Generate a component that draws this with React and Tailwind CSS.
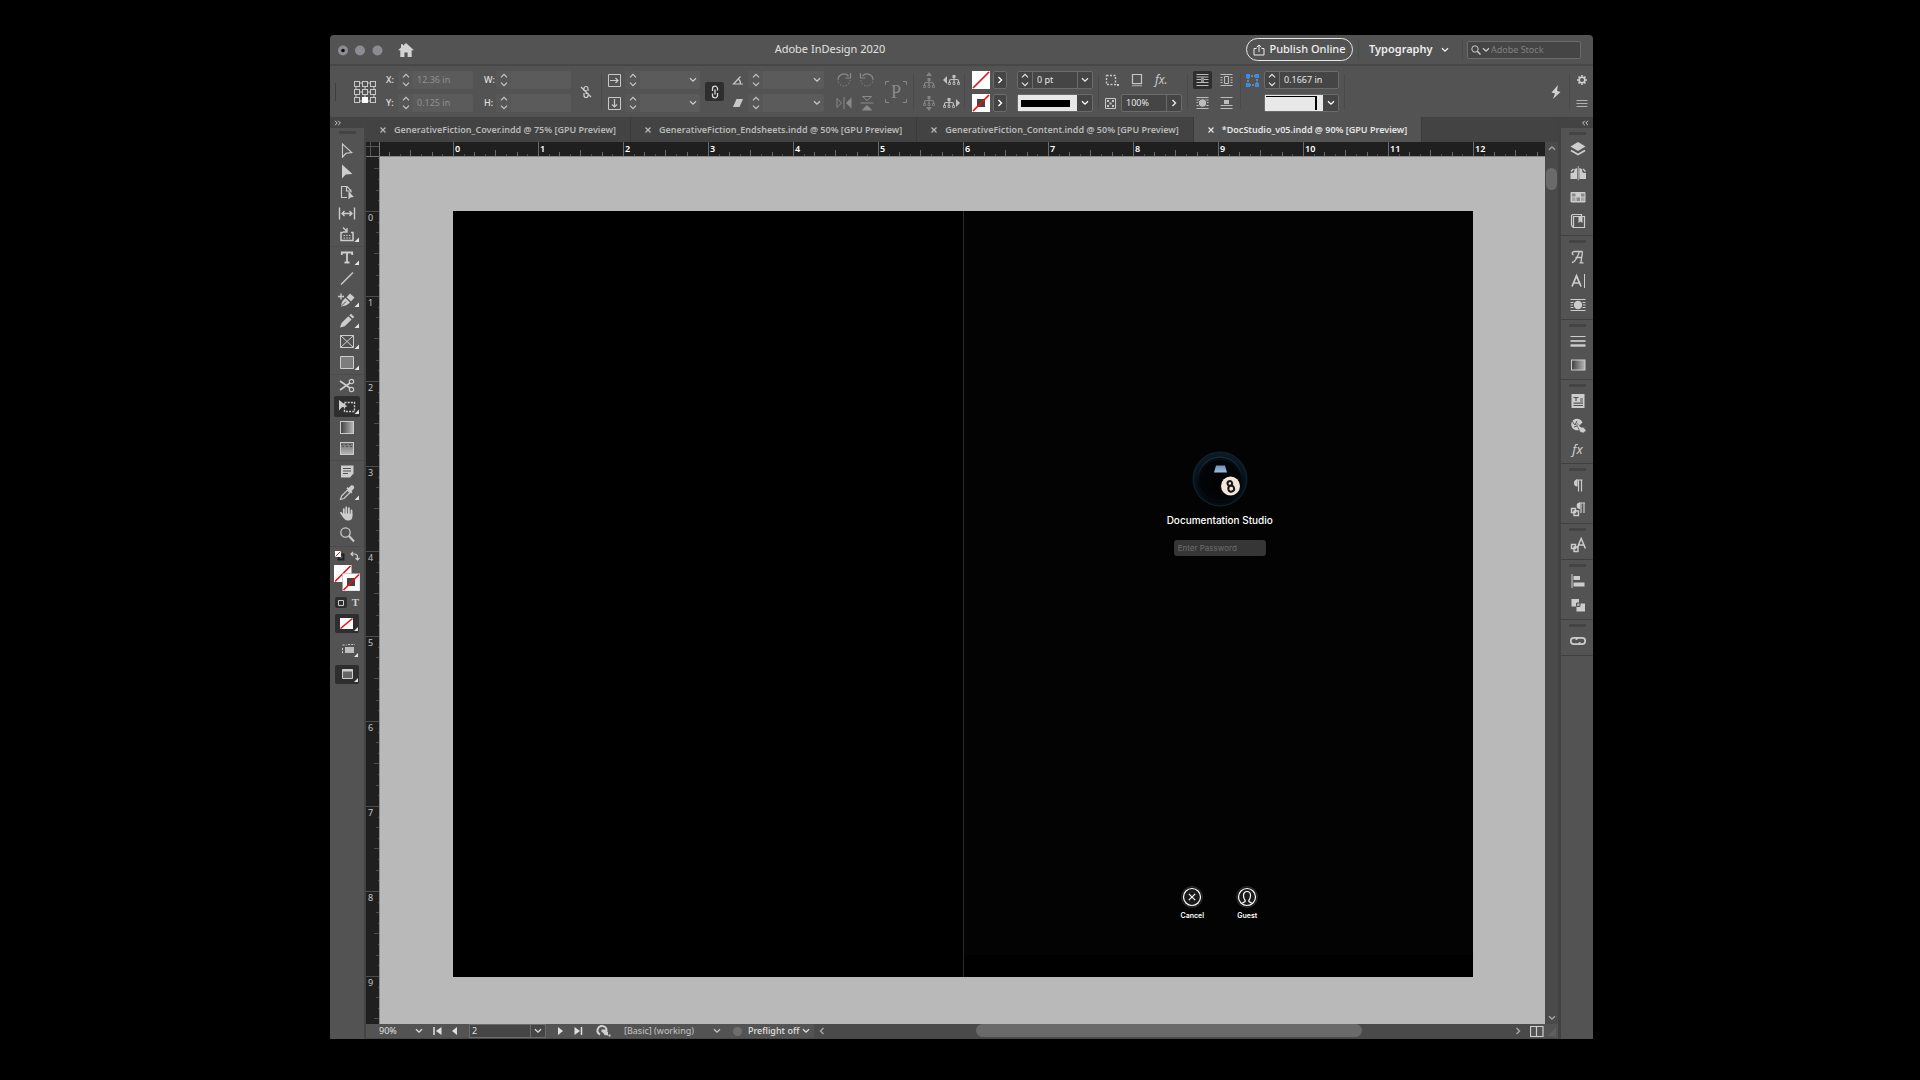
import { useState } from "react";
import clsx from "clsx";

const INCHES = [0, 1, 2, 3, 4, 5, 6, 7, 8, 9, 10, 11, 12];

const TABS = [
  "GenerativeFiction_Cover.indd @ 75% [GPU Preview]",
  "GenerativeFiction_Endsheets.indd @ 50% [GPU Preview]",
  "GenerativeFiction_Content.indd @ 50% [GPU Preview]",
  "*DocStudio_v05.indd @ 90% [GPU Preview]",
];

const Icon = ({ w = 16, h = 16, className, children }) => (
  <svg
    width={w}
    height={h}
    viewBox={`0 0 ${w} ${h}`}
    fill="none"
    stroke="currentColor"
    strokeWidth="1"
    className={clsx("shrink-0", className)}
    aria-hidden="true"
  >
    {children}
  </svg>
);

const ChevronDown = ({ className }) => (
  <Icon w={8} h={6} className={className}>
    <path d="M1 1.2l3 3 3-3" strokeWidth="1.3" />
  </Icon>
);

const ChevronRight = () => (
  <Icon w={6} h={8}>
    <path d="M1.5 1l3 3-3 3" strokeWidth="1.4" />
  </Icon>
);

const Stepper = () => (
  <Icon w={8} h={14}>
    <path d="M1 4.4l3-3 3 3M1 9.6l3 3 3-3" strokeWidth="1.2" />
  </Icon>
);

const NoneSwatch = ({ ring }) => (
  <svg width="18" height="18" className="shrink-0" aria-hidden="true">
    <rect width="18" height="18" fill="#fff" />
    {ring && <rect x="5" y="5" width="8" height="8" fill="#454545" />}
    <path d="M1 17L17 1" stroke="#f40b0b" strokeWidth="1.7" />
  </svg>
);

const Dropdown = ({ label, value, className }) => (
  <label className={clsx("flex items-center", className)}>
    <select
      aria-label={label}
      className="min-w-0 flex-1 appearance-none bg-transparent outline-none"
    >
      <option>{value}</option>
    </select>
    <ChevronDown className="pointer-events-none" />
  </label>
);

const Field = ({ label, value, enabled, menu, className }) => (
  <div
    className={clsx(
      "flex h-[18px] rounded-xs",
      enabled
        ? "border border-[#6b6b6b] bg-[#454545] text-[#e6e6e6]"
        : "bg-[#5b5b5b] text-[#909090]",
      className
    )}
  >
    <button
      aria-label={`Step ${label}`}
      className={clsx(
        "flex w-[15px] shrink-0 items-center justify-center",
        enabled ? "border-r border-[#6b6b6b]" : "bg-[#575757] text-[#c8c8c8]"
      )}
    >
      <Stepper />
    </button>
    <input
      aria-label={label}
      defaultValue={value}
      className="w-0 min-w-0 flex-1 bg-transparent pl-1 text-[9px] outline-none"
    />
    {menu && (
      <button
        aria-label={`${label} options`}
        className={clsx(
          "flex w-[15px] shrink-0 items-center justify-center",
          enabled ? "border-l border-[#6b6b6b]" : "text-[#c8c8c8]"
        )}
      >
        <ChevronDown />
      </button>
    )}
  </div>
);

const LabeledField = ({ name, value }) => (
  <div className="flex items-center">
    <span className="w-[12px] text-[9px] font-medium text-[#e0e0e0]">{name}:</span>
    <Field label={name} value={value} className="w-[75px]" />
  </div>
);

const Divider = ({ className }) => (
  <div className={clsx("w-px self-stretch bg-[#4a4a4a]", className)} />
);

const Rows = ({ className, children }) => (
  <div className={clsx("flex shrink-0 flex-col gap-[5px]", className)}>{children}</div>
);

const Cell = ({ label, className, children }) => (
  <button
    aria-label={label}
    className={clsx("flex h-[18px] items-center justify-center", className)}
  >
    {children}
  </button>
);

const TitleBar = () => (
  <header className="flex h-[29px] shrink-0 items-center pr-3 pl-2">
    <svg width="46" height="12" className="shrink-0" aria-hidden="true">
      <circle cx="5" cy="6.5" r="5" fill="#8e8b93" />
      <circle cx="5" cy="6.5" r="1.8" fill="#111" />
      <circle cx="22" cy="6.5" r="5" fill="#8e8b93" />
      <circle cx="39.5" cy="6.5" r="5" fill="#8e8b93" />
    </svg>
    <button aria-label="Home" className="ml-[14px] text-[#d2d2d2]">
      <Icon w={16} h={14}>
        <path
          d="M8 0L16 7.2h-2.3V14H9.6V9.4H6.4V14H2.3V7.2H0L3 4.4V1.2h2v1.5z"
          fill="currentColor"
          stroke="none"
        />
      </Icon>
    </button>
    <h1 className="flex-1 text-center text-[11px] text-[#e2e2e2]">
      Adobe InDesign 2020
    </h1>
    <button className="flex h-[23px] w-[107px] items-center justify-center gap-1 rounded-full border border-[#e8e8e8] text-[11px] font-medium text-[#eeeeee]">
      <Icon w={12} h={12}>
        <path d="M3.5 4.5H1V11h10V4.5H8.5M6 8V1M3.7 3.2L6 1l2.3 2.2" />
      </Icon>
      Publish Online
    </button>
    <Divider className="my-1 ml-[5px]" />
    <Dropdown
      label="Workspace"
      value="Typography"
      className="ml-[10px] gap-2 text-[11px] font-semibold text-[#eeeeee]"
    />
    <Divider className="my-1 ml-[13px]" />
    <label className="ml-[4px] flex h-[18px] w-[114px] items-center gap-px rounded-xs border border-[#6b6b6b] bg-[#454545] pl-[3px] text-[#cccccc]">
      <Icon w={10} h={10}>
        <circle cx="4" cy="4" r="3.2" />
        <path d="M6.3 6.3L9.5 9.5" strokeWidth="1.4" />
      </Icon>
      <ChevronDown />
      <input
        aria-label="Search"
        placeholder="Adobe Stock"
        className="w-0 min-w-0 flex-1 bg-transparent text-[9px] outline-none placeholder:text-[#808080]"
      />
    </label>
  </header>
);

const ReferencePoints = () => (
  <Icon w={24} h={24} className="text-[#c8c8c8]">
    <path d="M6 3h3M15 3h3M6 12h3M15 12h3M6 21h3M15 21h3M3 6v3M3 15v3M12 6v3M12 15v3M21 6v3M21 15v3" />
    {[1, 9, 17].map((y) =>
      [1, 9, 17].map((x) => (
        <rect
          key={`${x}-${y}`}
          x={x + 0.5}
          y={y + 0.5}
          width="5"
          height="5"
          fill={x === 9 && y === 17 ? "#fff" : "none"}
          stroke={x === 9 && y === 17 ? "#fff" : "currentColor"}
        />
      ))
    )}
  </Icon>
);

// 12 x 11 hierarchy: one parent box over three children
const TreeGlyph = () => (
  <>
    <path d="M6 3v6M1.5 9V7q0-1.500 1.500-1.500h6q1.500 0 1.500 1.500v2" strokeWidth="1.2" />
    <path d="M4.5 1h3v3h-3z" fill="currentColor" stroke="none" />
    <path d="M.5 8.500h2v2h-2zM5 8.500h2v2H5zM9.500 8.500h2v2h-2z" strokeWidth="0.8" />
  </>
);

const ControlBar = () => (
  <div className="flex h-[53px] shrink-0 items-center border-t-2 border-[#474747] pr-[5px] pl-[5px]">
    <div className="h-[18px] w-px bg-[#3f3f3f]" />
    <button aria-label="Reference point" className="ml-[17px]">
      <ReferencePoints />
    </button>
    <Rows className="ml-[9px]">
      <LabeledField name="X" value="12.36 in" />
      <LabeledField name="Y" value="0.125 in" />
    </Rows>
    <Rows className="ml-[11px]">
      <LabeledField name="W" />
      <LabeledField name="H" />
    </Rows>
    <button aria-label="Constrain proportions" className="ml-[9px] text-[#cfcfcf]">
      <Icon w={12} h={14}>
        <path d="M4 6V3.5a2 2 0 0 1 4 0V6M4 8v2.5a2 2 0 0 0 4 0V8M6 5v4M1 2l10 10" strokeWidth="1.2" />
      </Icon>
    </button>
    <Divider className="my-2 ml-[9px]" />
    <Rows className="ml-[6px] text-[#c8c8c8]">
      <div className="flex items-center gap-[4px]">
        <Icon w={13} h={13}>
          <path d="M.5.5h12v12H.5z" />
          <path d="M2 6.5h8M7.5 4L10 6.5 7.5 9" strokeWidth="1.2" />
        </Icon>
        <Field label="Scale X" menu className="w-[75px]" />
      </div>
      <div className="flex items-center gap-[4px]">
        <Icon w={13} h={13}>
          <path d="M.5.5h12v12H.5z" />
          <path d="M6.5 2v8M4 7.5L6.5 10 9 7.5" strokeWidth="1.2" />
        </Icon>
        <Field label="Scale Y" menu className="w-[75px]" />
      </div>
    </Rows>
    <button
      aria-label="Link scale"
      className="ml-[5px] flex h-[19px] w-[19px] items-center justify-center rounded-xs bg-[#2e2e2e] text-[#d8d8d8]"
    >
      <Icon w={8} h={14}>
        <path d="M1.5 6V3.5a2.5 2.3 0 0 1 5 0v2M6.5 8v2.5a2.5 2.3 0 0 1-5 0v-2M4 4.5v5" strokeWidth="1.3" />
      </Icon>
    </button>
    <Rows className="ml-[8px] text-[#c8c8c8]">
      <div className="flex items-center gap-[4px]">
        <Icon w={12} h={10}>
          <path d="M11 9H1.5l7-7.5M6 3.5c2 1.500 2.500 3 2.500 5.500" strokeWidth="1.2" />
        </Icon>
        <Field label="Rotation" menu className="w-[76px]" />
      </div>
      <div className="flex items-center gap-[4px]">
        <Icon w={12} h={10}>
          <path d="M4.5 1H11L7.5 9H1z" fill="currentColor" stroke="none" />
        </Icon>
        <Field label="Shear" menu className="w-[76px]" />
      </div>
    </Rows>
    <Rows className="ml-[12px] text-[#8a8a8a]">
      <div className="flex gap-[7px]">
        <Cell label="Rotate clockwise">
          <Icon w={16} h={16}>
            <path d="M2 8a6 6 0 0 1 10.5-4" strokeWidth="1.2" />
            <path d="M14 8a6 6 0 0 1-12 0" strokeDasharray="1.5 1.5" />
            <path d="M14.5 1v5h-5" strokeWidth="1.2" />
          </Icon>
        </Cell>
        <Cell label="Rotate counterclockwise">
          <Icon w={16} h={16}>
            <path d="M14 8A6 6 0 0 0 3.5 4" strokeWidth="1.2" />
            <path d="M2 8a6 6 0 0 0 12 0" strokeDasharray="1.5 1.5" />
            <path d="M1.5 1v5h5" strokeWidth="1.2" />
          </Icon>
        </Cell>
      </div>
      <div className="flex gap-[7px]">
        <Cell label="Flip horizontal">
          <Icon w={16} h={16}>
            <path d="M1 3.5v9L5.5 8zM8 2v12" />
            <path d="M15.5 2.5v11L10 8z" fill="currentColor" stroke="none" />
          </Icon>
        </Cell>
        <Cell label="Flip vertical">
          <Icon w={16} h={16}>
            <path d="M3.5 1.5h9l-4.500 4zM1.5 8h13" />
            <path d="M2.5 15.5h11L8 10z" fill="currentColor" stroke="none" />
          </Icon>
        </Cell>
      </div>
    </Rows>
    <div className="relative ml-[9px] flex h-[24px] w-[24px] items-center justify-center text-[18px] leading-none text-[#8a8a8a]">
      <Icon w={24} h={24} className="absolute inset-0">
        <path d="M1.5 5V1.5H5M19 1.5h3.5V5M22.5 19v3.5H19M5 22.5H1.5V19" />
      </Icon>
      <span className="font-['Liberation_Serif',serif]">P</span>
    </div>
    <Divider className="my-2 ml-[5px]" />
    <Rows className="ml-[9px]">
      <div className="flex gap-2">
        <Cell label="Select container" className="text-[#858585]">
          <Icon w={12} h={16}>
            <g transform="translate(0 5)">
              <TreeGlyph />
            </g>
            <path d="M3 4l3-4 3 4z" fill="currentColor" stroke="none" />
          </Icon>
        </Cell>
        <Cell label="Select previous object" className="text-[#c0c0c0]">
          <Icon w={17} h={12}>
            <path d="M4 2v8L0 6z" fill="currentColor" stroke="none" />
            <g transform="translate(5)">
              <TreeGlyph />
            </g>
          </Icon>
        </Cell>
      </div>
      <div className="flex gap-2">
        <Cell label="Select content" className="text-[#858585]">
          <Icon w={12} h={16}>
            <TreeGlyph />
            <path d="M3 12l3 4 3-4z" fill="currentColor" stroke="none" />
          </Icon>
        </Cell>
        <Cell label="Select next object" className="text-[#c0c0c0]">
          <Icon w={17} h={12}>
            <path d="M13 2v8l4-4z" fill="currentColor" stroke="none" />
            <TreeGlyph />
          </Icon>
        </Cell>
      </div>
    </Rows>
    <Divider className="my-2 ml-[4px]" />
    <Rows className="ml-[7px]">
      {["Fill", "Stroke"].map((name) => (
        <div key={name} className="flex gap-[3px]">
          <button aria-label={name}>
            <NoneSwatch ring={name === "Stroke"} />
          </button>
          <Cell label={`${name} options`} className="w-[14px] rounded-xs border border-[#6b6b6b] bg-[#454545] text-white">
            <ChevronRight />
          </Cell>
        </div>
      ))}
    </Rows>
    <Rows className="ml-[10px]">
      <Field label="Stroke weight" value="0 pt" enabled menu className="w-[76px]" />
      <button aria-label="Stroke type" className="flex h-[18px] w-[76px] rounded-xs border border-[#6b6b6b] bg-[#454545] text-white">
        <span className="flex h-full flex-1 items-center bg-[#e8e8e8] pr-[7px] pl-[3px]">
          <span className="h-[7px] flex-1 bg-black" />
        </span>
        <span className="flex h-full w-[15px] items-center justify-center">
          <ChevronDown />
        </span>
      </button>
    </Rows>
    <Divider className="my-2 ml-[5px]" />
    <Rows className="ml-[6px] text-[#c8c8c8]">
      <div className="flex gap-[11px]">
        <Cell label="Corner effects">
          <Icon w={14} h={12}>
            <path d="M1.5 1.5h9v9h-9z" strokeDasharray="2 1.5" strokeWidth="1.4" />
            <path d="M12 10h2v2h-2z" fill="currentColor" stroke="none" />
          </Icon>
        </Cell>
        <Cell label="Drop shadow">
          <Icon w={14} h={14}>
            <path d="M2.5 1.5h9v9h-9z" strokeWidth="1.2" />
            <path d="M2 12.5h10" stroke="#9a9a9a" strokeWidth="1.6" />
          </Icon>
        </Cell>
        <Cell label="Effects" className="text-[12px] italic">
          fx.
        </Cell>
      </div>
      <div className="flex items-center gap-[5px]">
        <Icon w={11} h={11}>
          <path d="M.5.5h10v10H.5z" />
          <path d="M2 2h2v2H2zM7 2h2v2H7zM4.500 4.500h2v2h-2zM2 7h2v2H2zM7 7h2v2H7z" fill="currentColor" stroke="none" />
        </Icon>
        <div className="flex h-[18px] w-[61px] rounded-xs border border-[#6b6b6b] bg-[#454545] text-[#e6e6e6]">
          <input
            aria-label="Opacity"
            defaultValue="100%"
            className="w-0 min-w-0 flex-1 bg-transparent pl-1 text-[9px] outline-none"
          />
          <button aria-label="Opacity slider" className="flex w-[15px] items-center justify-center border-l border-[#6b6b6b]">
            <ChevronRight />
          </button>
        </div>
      </div>
    </Rows>
    <Divider className="my-2 ml-[5px]" />
    <Rows className="ml-[5px] text-[#bcbcbc]">
      <div className="flex gap-[5px]">
        <Cell label="No text wrap" className="w-[19px] rounded-xs bg-[#2e2e2e]">
          <Icon w={13} h={12}>
            <path d="M.5.5h12M.5 3h12M.5 5.500h12M.5 8.500h12M.5 11.500h12" />
            <path d="M5 3h3v5H5z" fill="#8c8c8c" stroke="none" />
          </Icon>
        </Cell>
        <Cell label="Wrap around bounding box" className="w-[19px]">
          <Icon w={13} h={12}>
            <path d="M.5.5h12M.5 3.500h2M.5 6h2M.5 8.500h2M.5 11.500h12M10.500 3.500h2M10.500 6h2M10.500 8.500h2M4.500 2.500h4v7h-4z" />
          </Icon>
        </Cell>
      </div>
      <div className="flex gap-[5px]">
        <Cell label="Wrap around object shape" className="w-[19px]">
          <Icon w={13} h={12}>
            <path d="M.5.5h12M.5 3h12M.5 5.500h12M.5 8.500h12M.5 11.500h12" />
            <circle cx="6.5" cy="6" r="4.2" fill="currentColor" stroke="#535353" />
          </Icon>
        </Cell>
        <Cell label="Jump object" className="w-[19px]">
          <Icon w={13} h={12}>
            <path d="M.5.5h12M.5 8.500h12M.5 11.500h12" />
            <path d="M4 3h5v4H4z" fill="currentColor" stroke="none" />
          </Icon>
        </Cell>
      </div>
    </Rows>
    <Divider className="my-2 ml-[4px]" />
    <Rows className="ml-[5px]">
      <div className="flex items-center gap-[5px]">
        <Icon w={13} h={13}>
          <path d="M2 2h9v9H2z" stroke="#b0b0b0" strokeDasharray="2 1" />
          <path d="M0 0h4v4H0zM9 0h4v4H9zM0 9h4v4H0zM9 9h4v4H9z" fill="#2f8fef" stroke="none" />
        </Icon>
        <Field label="Corner size" value="0.1667 in" enabled className="w-[75px]" />
      </div>
      <button
        aria-label="Corner shape"
        className="ml-[18px] flex h-[18px] w-[75px] rounded-xs border border-[#6b6b6b] bg-[#454545] text-white"
      >
        <span className="flex h-full flex-1 bg-[#e8e8e8] pt-px pr-[6px] pb-px pl-px">
          <span className="flex-1 border-t border-r-2 border-black" />
        </span>
        <span className="flex h-full w-[15px] items-center justify-center">
          <ChevronDown />
        </span>
      </button>
    </Rows>
    <Divider className="my-2 ml-[5px]" />
    <button aria-label="Quick apply" className="ml-auto text-[#d0d0d0]">
      <Icon w={10} h={14}>
        <path d="M7 0L.5 7.500l3.500 1L2 14l7.500-7-3.500-1.200z" fill="currentColor" stroke="none" />
      </Icon>
    </button>
    <Divider className="my-2 ml-[8px]" />
    <Rows className="ml-[6px] text-[#d0d0d0]">
      <Cell label="Customize control panel">
        <Icon w={12} h={12}>
          <circle cx="6" cy="6" r="2.8" strokeWidth="1.6" />
          <path d="M6 1v2M6 9v2M1 6h2M9 6h2M2.5 2.5l1.400 1.400M8.100 8.100l1.400 1.400M9.500 2.500L8.100 3.900M3.900 8.100L2.500 9.500" strokeWidth="1.5" />
        </Icon>
      </Cell>
      <Cell label="Panel menu">
        <Icon w={12} h={9}>
          <path d="M.5 1.500h11M.5 4.500h11M.5 7.500h11" stroke="#b0b0b0" />
        </Icon>
      </Cell>
    </Rows>
  </div>
);

const Corner = () => (
  <path d="M26 11.5V16h-4.500z" fill="#e4e4e4" stroke="none" />
);

const TOOL_GROUPS = [
  [
    {
      name: "Selection",
      art: <path d="M9.500 2v13l3.500-3.700 5.800-.8z" strokeWidth="1.1" />,
    },
    {
      name: "Direct selection",
      art: <path d="M9 1.500v14l3.700-3.900 6.800-.7z" fill="currentColor" stroke="none" />,
    },
    {
      name: "Page",
      art: (
        <>
          <path d="M14 13.500H8.500v-11H14l4 4v2M13.500 2.500v4.500h4.500" strokeWidth="1.1" />
          <path d="M15.500 7v8.500l2-2 3.300-.4z" fill="currentColor" stroke="none" />
        </>
      ),
    },
    {
      name: "Gap",
      art: (
        <path d="M6.500 2.500v12M21.500 2.500v12M9 8.500h10M11.500 6L9 8.500l2.500 2.500M16.500 6L19 8.500 16.500 11" strokeWidth="1.4" />
      ),
    },
    {
      name: "Content collector",
      more: true,
      art: (
        <>
          <path d="M10 6.500H8v8h12v-8h-2" strokeWidth="1.5" />
          <path d="M10 1.500l4 4M14 2v4h-4" strokeWidth="1.3" />
          <path d="M10.500 9.500h7M10.500 12h7" strokeDasharray="1.5 1.2" />
        </>
      ),
    },
  ],
  [
    {
      name: "Type",
      more: true,
      art: (
        <path d="M8.800 6V3.500h10.400V6M14 3.500v10M11.500 13.500h5" strokeWidth="1.8" />
      ),
    },
    { name: "Line", art: <path d="M8 14.500L20 2.500" strokeWidth="1.4" /> },
    {
      name: "Pen",
      more: true,
      art: (
        <>
          <path d="M5 5.500h6M8 2.500v6" strokeWidth="1.3" />
          <path d="M8 15.500c.5-3.500 1-6 4.500-8.500l4.500 4.500C15 14 12 15 8 15.500z" fill="currentColor" stroke="none" />
          <path d="M13.500 6.200L17 2.500l4.500 4L18 10.500z" fill="currentColor" stroke="none" />
          <path d="M8.500 15L13 10.500" stroke="#535353" />
        </>
      ),
    },
    {
      name: "Pencil",
      more: true,
      art: (
        <path d="M7 15.500l1.500-4.500 6.800-6.800 3.300 3.300-6.800 6.700zM16.300 3.200L18 1.700l3.200 3.200-1.600 1.600z" fill="currentColor" stroke="none" />
      ),
    },
    {
      name: "Rectangle frame",
      more: true,
      art: <path d="M7.500 2.500h13v12h-13zM7.500 2.500l13 12M20.500 2.500l-13 12" />,
    },
    {
      name: "Rectangle",
      more: true,
      art: <path d="M7.500 2.500h13v12h-13z" fill="#7d7d7d" />,
    },
  ],
  [
    {
      name: "Scissors",
      art: (
        <>
          <circle cx="18.5" cy="4.5" r="2.2" strokeWidth="1.2" />
          <circle cx="18.5" cy="12.5" r="2.2" strokeWidth="1.2" />
          <path d="M7 4l10 7M7 13l10-7" strokeWidth="1.6" />
        </>
      ),
    },
    {
      name: "Free transform",
      more: true,
      active: true,
      art: (
        <>
          <path d="M11.500 4.500h10v9h-10z" strokeDasharray="2 1.2" strokeWidth="1.4" />
          <path d="M6 2v10.500l3-3.200 5.500-.8z" fill="currentColor" stroke="none" />
        </>
      ),
    },
    {
      name: "Gradient swatch",
      art: <rect x="7.500" y="2.500" width="13" height="12" fill="url(#ramp)" />,
    },
    {
      name: "Gradient feather",
      art: (
        <>
          <rect x="7.500" y="2.500" width="13" height="12" fill="url(#feather)" />
          <path d="M8 4.500h12M9 6.500h12" stroke="#555" strokeDasharray="2 2" />
        </>
      ),
    },
  ],
  [
    {
      name: "Note",
      art: (
        <>
          <path d="M8 2.500h12.500v8l-3.500 4H8z" fill="currentColor" stroke="none" />
          <path d="M10 5.500h8M10 8h8M10 10.500h5" stroke="#535353" />
        </>
      ),
    },
    {
      name: "Eyedropper",
      more: true,
      art: (
        <>
          <path d="M7.500 15.500l1-3.500 6-6 2.500 2.500-6 6z" strokeWidth="1.2" />
          <path d="M13.500 4.500l5 5 1-1.500-1-1 2.500-2.500c1-2-1-4-3-3L15.500 4l-1-1z" fill="currentColor" stroke="none" />
        </>
      ),
    },
    {
      name: "Hand",
      art: (
        <>
          <path d="M10.800 10V4.200M13.300 9V2.500M15.900 9V3.200M18.500 10V5.500M8 7.800l3 4.500" strokeWidth="1.8" strokeLinecap="round" />
          <path d="M10 8.500h9.400v3c0 2.500-1.500 4-4 4h-1c-2 0-3-1.500-4.400-4z" fill="currentColor" stroke="none" />
        </>
      ),
    },
    {
      name: "Zoom",
      art: (
        <>
          <circle cx="12.5" cy="6.5" r="4.7" strokeWidth="1.2" />
          <path d="M16 10l5 5.500" strokeWidth="2" />
        </>
      ),
    },
  ],
];

const Grip = () => <div className="mx-auto h-[3px] w-[17px] bg-[#444444]" />;

const Toolbox = () => {
  const [tool, setTool] = useState("Free transform");
  return (
    <aside className="flex w-[36px] shrink-0 flex-col border-r-2 border-[#444444] text-[#cdcdcd]">
      <svg width="0" height="0" className="absolute" aria-hidden="true">
        <linearGradient id="ramp">
          <stop offset="0" stopColor="#3f3f3f" />
          <stop offset="1" stopColor="#b8b8b8" />
        </linearGradient>
        <linearGradient id="feather" x2="0" y2="1">
          <stop offset="0" stopColor="#6a6a6a" />
          <stop offset="1" stopColor="#b8b8b8" />
        </linearGradient>
      </svg>
      <div className="flex h-[11px] items-center bg-[#434343] pl-1">
        <Icon w={8} h={6}>
          <path d="M1 .8L3.200 3 1 5.200M4.200.8L6.400 3 4.200 5.200" />
        </Icon>
      </div>
      <div className="pt-[3px] pb-[6px]">
        <Grip />
      </div>
      {TOOL_GROUPS.map((group, i) => (
        <div key={i} className="flex flex-col items-center border-b border-[#4b4b4b] pb-px">
          {group.map((t) => (
            <button
              key={t.name}
              aria-label={t.name}
              onClick={() => setTool(t.name)}
              className={clsx(
                "flex h-[21px] w-[26px] items-center justify-center rounded-xs",
                tool === t.name && "bg-[#2e2e2e]"
              )}
            >
              <Icon w={28} h={17}>
                {t.art}
                {t.more && <Corner />}
              </Icon>
            </button>
          ))}
        </div>
      ))}
      <div className="flex h-[18px] items-center justify-between pr-1 pl-[5px]">
        <Icon w={10} h={10}>
          <path d="M3.500 3.500h5v5h-5z" stroke="#222" strokeWidth="2" />
          <path d="M0 0h6v6H0z" fill="#fff" stroke="none" />
          <path d="M.5 5.500l5-5" stroke="#f40b0b" />
        </Icon>
        <Icon w={10} h={10}>
          <path d="M1 3h3.500c2 0 3 1 3 3v3M3 1L1 3l2 2M5.500 7l2 2 2-2" strokeWidth="1.2" />
        </Icon>
      </div>
      <button aria-label="Fill and stroke" className="mx-auto">
        <svg width="26" height="26" viewBox="0 0 26 26" aria-hidden="true">
          <path d="M0 0h17.500v17H0z" fill="#fff" />
          <path d="M1 16.500L16.500 1" stroke="#f40b0b" strokeWidth="1.6" />
          <path d="M8.500 8.500H26V26H8.500z" fill="#fff" stroke="#999" strokeWidth="0.5" />
          <path d="M13 13h8v8h-8z" fill="#454545" />
          <path d="M9.500 25L25 9.500" stroke="#f40b0b" strokeWidth="1.6" />
        </svg>
      </button>
      <div className="mt-[6px] flex items-center justify-between px-[5px]">
        <button aria-label="Formatting affects container" className="flex h-[11px] w-[12px] items-center justify-center rounded-xs bg-[#2e2e2e]">
          <Icon w={8} h={8}>
            <path d="M1.500 1.500h5v5h-5z" />
          </Icon>
        </button>
        <button aria-label="Formatting affects text" className="font-['Liberation_Serif',serif] text-[11px] leading-none font-bold">
          T
        </button>
      </div>
      <button aria-label="Apply none" className="mx-auto mt-[6px] rounded-xs bg-[#2e2e2e]">
        <svg width="24" height="19" viewBox="0 0 24 19" aria-hidden="true">
          <path d="M5 4h13v11H5z" fill="#fff" />
          <path d="M5.500 14.500L17.500 4.500" stroke="#f40b0b" strokeWidth="1.6" />
          <path d="M23 13v4h-4z" fill="#e4e4e4" />
        </svg>
      </button>
      <button aria-label="View options" className="mx-auto mt-[6px]">
        <Icon w={24} h={19}>
          <path d="M10 8h9v6h-9z" fill="#bdbdbd" stroke="none" />
          <path d="M7.500 6h4M7.500 9v6M13 5.500h7" strokeDasharray="2 1.2" />
          <path d="M23 14v4h-4z" fill="#e4e4e4" stroke="none" />
        </Icon>
      </button>
      <button aria-label="Screen mode" className="mx-auto mt-[7px] rounded-xs bg-[#2e2e2e]">
        <Icon w={24} h={19}>
          <path d="M7.500 4.500h10v9h-10z" fill="#666" />
          <path d="M7.500 5.500h10" strokeWidth="2" />
          <path d="M23 13v4h-4z" fill="#e4e4e4" stroke="none" />
        </Icon>
      </button>
    </aside>
  );
};

const DocumentTabs = () => {
  const [active, setActive] = useState(3);
  return (
    <div className="flex h-[25px] shrink-0 bg-[#434343]">
      {TABS.map((tab, i) => (
        <div
          key={tab}
          className={clsx(
            "flex items-center gap-2 border-r border-[#3a3a3a] pr-[14px] pl-[14px] text-[9px] font-semibold whitespace-nowrap",
            active === i ? "bg-[#535353] text-[#e6e6e6]" : "text-[#b9b9b9]"
          )}
        >
          <button aria-label={`Close ${tab}`}>
            <Icon w={6} h={6}>
              <path d="M.5.5l5 5M5.500.5l-5 5" strokeWidth="1.2" />
            </Icon>
          </button>
          <button onClick={() => setActive(i)}>{tab}</button>
        </div>
      ))}
    </div>
  );
};

const HorizontalTicks = () => (
  <svg width="85" height="14" className="shrink-0" stroke="#6a6a6a" aria-hidden="true">
    <path d="M.5 0v14" />
    <path d="M21.500 10v4M42.500 8v6M64.500 10v4" />
    <path d="M11.500 12v2M32.500 12v2M53.500 12v2M74.500 12v2" stroke="#4c4c4c" />
  </svg>
);

const VerticalTicks = () => (
  <svg width="14" height="85" className="shrink-0" stroke="#4c4c4c" aria-hidden="true">
    <path d="M0 .5h14M10 21.500h4M8 42.500h6M10 64.500h4" />
    <path d="M12 11.500h2M12 32.500h2M12 53.500h2M12 74.500h2" />
  </svg>
);

const HorizontalRuler = () => (
  <div className="flex h-[15px] min-w-0 flex-1 overflow-hidden border-b border-[#8a8a8a] bg-[#1f1f1f]">
    <div className="flex w-[73px] shrink-0 justify-end overflow-hidden">
      <HorizontalTicks />
    </div>
    {INCHES.map((n) => (
      <div key={n} className="relative shrink-0">
        <HorizontalTicks />
        <span className="absolute top-px left-[2px] text-[9px] leading-[11px] font-semibold text-white">
          {n}
        </span>
      </div>
    ))}
  </div>
);

const VerticalRuler = () => (
  <div className="flex w-[14px] shrink-0 flex-col overflow-hidden border-r border-[#8a8a8a] bg-[#1f1f1f]">
    <div className="flex h-[54px] shrink-0 flex-col justify-end overflow-hidden">
      <VerticalTicks />
    </div>
    {INCHES.slice(0, 10).map((n) => (
      <div key={n} className="relative shrink-0">
        <VerticalTicks />
        <span className="absolute top-px left-[2px] text-[9px] leading-[11px] text-[#c4c4c4]">
          {n}
        </span>
      </div>
    ))}
  </div>
);

const EightBall = () => (
  <svg width="56" height="56" viewBox="0 0 56 56" aria-hidden="true">
    <defs>
      <radialGradient id="ball" cx="0.5" cy="0.55" r="0.5">
        <stop offset="0" stopColor="#000" />
        <stop offset="0.75" stopColor="#020508" />
        <stop offset="1" stopColor="#0a1a26" />
      </radialGradient>
      <linearGradient id="glint" x2="0" y2="1">
        <stop offset="0" stopColor="#6f8fb8" />
        <stop offset="1" stopColor="#9fb8de" />
      </linearGradient>
      <linearGradient id="rim" x2="0" y2="1">
        <stop offset="0" stopColor="#1d3342" />
        <stop offset="0.6" stopColor="#050b10" />
      </linearGradient>
    </defs>
    <circle cx="28" cy="28" r="27" fill="url(#ball)" stroke="#0e2433" />
    <circle cx="28" cy="28" r="22" stroke="url(#rim)" strokeWidth="1.2" fill="none" />
    <path d="M24 14.500h9l2 7H22z" fill="url(#glint)" />
    <circle cx="38.5" cy="35" r="9.5" fill="#f3e6d8" />
    <g stroke="#15171c" strokeWidth="2" fill="none" transform="rotate(-15 38.5 35)">
      <circle cx="38.5" cy="32.3" r="2.3" />
      <circle cx="38.5" cy="37.8" r="2.9" />
    </g>
  </svg>
);

const LoginPage = () => (
  <div className="flex flex-1 flex-col border-l border-[#2a2a2a] pb-[22px] font-['Inter',sans-serif] text-white">
    <div className="flex flex-1 flex-col items-center bg-[#030303] pt-[240px] pb-[34px] pl-[3px]">
      <EightBall />
      <h2 className="mt-[6px] text-[10px] leading-[14px] font-medium">
        Documentation Studio
      </h2>
      <input
        type="password"
        aria-label="Password"
        placeholder="Enter Password"
        className="mt-[13px] h-4 w-[92px] rounded-[3px] bg-[#363636] px-1 text-[8px] outline-none placeholder:text-[#6c6c6c]"
      />
      <div className="mt-auto flex gap-[9px] text-[7px] leading-[10px] font-semibold">
        <button className="flex w-[46px] flex-col items-center gap-[3px]">
          <Icon w={22} h={22}>
            <circle cx="11" cy="11" r="10.5" fill="#1b1b1b" stroke="#2c2c2c" />
            <circle cx="11" cy="11" r="8.5" strokeWidth="1.2" />
            <path d="M7.800 7.800l6.400 6.400M14.200 7.800l-6.400 6.400" strokeWidth="1.1" />
          </Icon>
          Cancel
        </button>
        <button className="flex w-[46px] flex-col items-center gap-[3px]">
          <Icon w={22} h={22}>
            <circle cx="11" cy="11" r="10.5" fill="#1b1b1b" stroke="#2c2c2c" />
            <circle cx="11" cy="11" r="8.5" strokeWidth="1.2" />
            <path
              d="M6.500 17.300c.5-1.300 2.800-1 2.800-2.300 0-1-1.800-2-1.800-5.500 0-2.700 1.500-4 3.500-4s3.500 1.300 3.500 4c0 3.500-1.800 4.500-1.800 5.500 0 1.300 2.300 1 2.800 2.300"
              strokeWidth="1.2"
            />
          </Icon>
          Guest
        </button>
      </div>
    </div>
  </div>
);

const Canvas = () => (
  <main className="flex min-w-0 flex-1 bg-[#b9b9b9] pt-[54px] pr-[72px] pb-[47px] pl-[73px]">
    <div className="flex flex-1 bg-black">
      <div className="flex-1" />
      <LoginPage />
    </div>
  </main>
);

const VerticalScrollbar = () => (
  <div className="flex w-[13px] shrink-0 flex-col items-center bg-[#4a4a4a] text-[#a8a8a8]">
    <div className="mt-[3px] rotate-180">
      <ChevronDown />
    </div>
    <div className="mt-[17px] h-[22px] w-[11px] rounded-full bg-[#6a6a6a]" />
    <ChevronDown className="mt-auto mb-[3px]" />
  </div>
);

const StatusBar = () => (
  <footer className="flex h-[15px] shrink-0 items-center border-b border-[#474747] pl-[13px] text-[9px] leading-[14px] text-[#e0e0e0]">
    <Dropdown label="Zoom level" value="90%" className="w-[44px]" />
    <button aria-label="First page" className="ml-[10px]">
      <Icon w={9} h={8}>
        <path d="M1 0v8" strokeWidth="1.5" />
        <path d="M8.500 0v8L3 4z" fill="currentColor" stroke="none" />
      </Icon>
    </button>
    <button aria-label="Previous page" className="ml-[10px]">
      <Icon w={6} h={8}>
        <path d="M5 0v8L0 4z" fill="currentColor" stroke="none" />
      </Icon>
    </button>
    <div className="ml-[11px] flex h-[14px] w-[77px] border border-[#6b6b6b] bg-[#454545]">
      <input
        aria-label="Page"
        defaultValue="2"
        className="w-0 min-w-0 flex-1 bg-transparent pl-[2px] outline-none"
      />
      <button aria-label="Page list" className="flex w-[15px] items-center justify-center border-l border-[#6b6b6b]">
        <ChevronDown />
      </button>
    </div>
    <button aria-label="Next page" className="ml-[12px]">
      <Icon w={6} h={8}>
        <path d="M0 0v8l5-4z" fill="currentColor" stroke="none" />
      </Icon>
    </button>
    <button aria-label="Last page" className="ml-[10px]">
      <Icon w={9} h={8}>
        <path d="M.5 0v8L6 4z" fill="currentColor" stroke="none" />
        <path d="M7.500 0v8" strokeWidth="1.5" />
      </Icon>
    </button>
    <button aria-label="Open" className="ml-[13px] text-[#cfcfcf]">
      <Icon w={15} h={12}>
        <path d="M4 9.500A4.500 4.500 0 1 1 10.500 6" strokeWidth="2" />
        <path d="M5.500 4.500h3.500l3 2.500v3.500L8.500 10c-.5-1-1-2.500-3-3z" fill="currentColor" stroke="none" />
        <path d="M12.500 9.500h2v2h-2z" fill="currentColor" stroke="none" />
      </Icon>
    </button>
    <Dropdown label="Preflight profile" value="[Basic] (working)" className="ml-[13px] w-[97px] text-[#c4c4c4]" />
    <span className="ml-[12px] h-[9px] w-[9px] rounded-full bg-[#6e6e6e]" />
    <Dropdown label="Preflight" value="Preflight off" className="ml-[6px] w-[62px] font-medium" />
    <div className="ml-1 flex h-full flex-1 items-center bg-[#4a4a4a] pr-[9px] pl-[5px] text-[#a8a8a8]">
      <span className="rotate-180">
        <ChevronRight />
      </span>
      <div className="flex h-full flex-1 pr-[153px] pl-[151px]">
        <div className="h-[13px] flex-1 rounded-full bg-[#6a6a6a]" />
      </div>
      <ChevronRight />
    </div>
    <button aria-label="Split layout view" className="text-[#cfcfcf]">
      <Icon w={14} h={11}>
        <path d="M.5.5h12.500v10H.5zM6.500.5v10" strokeWidth="1.2" />
      </Icon>
    </button>
    <Icon w={14} h={14}>
      <path d="M12 3v9H4z" fill="#5f5f5f" stroke="none" />
    </Icon>
  </footer>
);

const PANELS = [
  [
    {
      name: "Layers",
      art: (
        <>
          <path d="M8 1l7.500 4.500L8 10 .5 5.500z" fill="currentColor" stroke="none" />
          <path d="M1 9.500l7 4 7-4" strokeWidth="1.8" />
        </>
      ),
    },
    {
      name: "Pages",
      art: (
        <>
          <path d="M7.200 3v11H.5V8l3.500-.5.500-3.500zM9.300 3v11H16V8l-3.500-.5-.5-3.500z" fill="currentColor" stroke="none" />
          <path d="M1 6.500L3.500 4M15.500 6.500L13 4" strokeWidth="1.4" />
          <path d="M8.250 1v14.500" strokeWidth="0.8" />
        </>
      ),
    },
    {
      name: "CC Libraries",
      art: (
        <>
          <path d="M1 3.500h14v9.500H1z" fill="currentColor" />
          <path d="M2 4.500h3.500v3H2zM6.500 8.500H10v3.500H6.500zM11 4.500h3.500v3H11z" fill="#8a8a8a" stroke="none" />
          <path d="M2 8.500h3.500v3.500H2zM11 8.500h3.500v3.500H11z" fill="#a6a6a6" stroke="none" />
        </>
      ),
    },
    {
      name: "Bookmarks",
      art: (
        <>
          <path d="M1.500 12.500v-10l1-1h9v2M1.500 12.500l2 2M3.500 3.500h11v11h-11z" strokeWidth="1.2" />
          <path d="M8.500 3.500h4V10l-2-1.500-2 1.500z" fill="currentColor" stroke="none" />
        </>
      ),
    },
  ],
  [
    {
      name: "Glyphs",
      art: (
        <path d="M3.500 6C1.500 5 2 2.500 4.500 2.500h8M12.500 2.500l-1.500 11M9.500 2.500C7.500 8 5.500 13 2 13.500M5.500 8.500h6M9.500 13.800h4" strokeWidth="1.3" />
      ),
    },
    {
      name: "Character",
      art: (
        <>
          <path d="M2 13.500L6.500 2.800 11 13.500M3.500 10h6" strokeWidth="1.7" />
          <path d="M14.500 1v14" />
        </>
      ),
    },
    {
      name: "Text wrap",
      art: (
        <>
          <path d="M.5 2.500h15M.5 5.500h3M.5 8h2.500M.5 10.500h3M12.500 5.500h3M13 8h2.500M12.500 10.500h3M.5 13.500h15" />
          <circle cx="8" cy="8" r="4.2" fill="currentColor" stroke="none" />
        </>
      ),
    },
  ],
  [
    {
      name: "Stroke",
      art: (
        <>
          <path d="M.5 3.500h15" />
          <path d="M.5 8h15" strokeWidth="1.7" />
          <path d="M.5 12.500h15" strokeWidth="2.4" />
        </>
      ),
    },
    {
      name: "Gradient",
      art: <rect x="1.500" y="3" width="13.500" height="10" fill="url(#ramp)" />,
    },
  ],
  [
    {
      name: "Articles",
      art: (
        <>
          <path d="M1.500 1h13v14h-13z" fill="currentColor" stroke="none" />
          <path d="M3.500 4.500h5M6 4.500V8M10 6h3M10 8h3M3.500 10.200h9.500M3.500 12.500h9.500" stroke="#535353" strokeWidth="1.2" />
        </>
      ),
    },
    {
      name: "Hyperlinks",
      art: (
        <>
          <path d="M9 13A5.800 5.800 0 1 1 12.500 5.500C10.500 7 10 9 9 8L6.500 7z" fill="currentColor" stroke="none" />
          <path d="M2 4l3 4 2-4M4 10l3-1" stroke="#535353" />
          <path d="M8 6.500l2.500 3.500 3.500.5 2 3-2.500 2.500-3.500-1-3.200-7.500z" fill="currentColor" stroke="#535353" strokeWidth="0.5" />
        </>
      ),
    },
    { name: "Effects", text: "fx" },
  ],
  [
    {
      name: "Paragraph styles",
      art: (
        <>
          <path d="M7.500 2.500a3.500 3.500 0 1 0 0 7z" fill="currentColor" stroke="none" />
          <path d="M6 3h6.500M8.500 2.500v12M11.500 2.500v12" strokeWidth="1.2" />
        </>
      ),
    },
    {
      name: "Paragraph",
      art: (
        <>
          <path d="M10 1.500a3.300 3.300 0 1 0 0 6.600z" fill="currentColor" stroke="none" />
          <path d="M9 2h6M11 1.500V12M14 1.500V12" strokeWidth="1.2" />
          <path d="M1.500 7.500h4v4h-4zM4 10h4.500v4.500H4z" strokeWidth="1.4" />
        </>
      ),
    },
  ],
  [
    {
      name: "Character styles",
      art: (
        <>
          <path d="M7 11.500l4.200-10 4.200 10M8.500 8H14" strokeWidth="1.5" />
          <path d="M1.500 7.500h4v4h-4zM4 10h4v4.500H4z" strokeWidth="1.4" />
        </>
      ),
    },
  ],
  [
    {
      name: "Align",
      art: (
        <>
          <path d="M2 1v14" />
          <path d="M3.500 3H10v4H3.500zM3.500 9.500h11v4h-11z" fill="currentColor" stroke="none" />
        </>
      ),
    },
    {
      name: "Pathfinder",
      art: (
        <>
          <path d="M1.500 2H9v7.500H1.500zM6.500 6.500H15v8H6.500z" fill="currentColor" stroke="none" />
          <path d="M6.500 6H10v3.500H6.500z" fill="#aaa" stroke="#535353" />
        </>
      ),
    },
  ],
  [
    {
      name: "Links",
      art: (
        <path d="M7.500 4.800H4a3.200 3.200 0 0 0 0 6.400h3.500a3 3 0 0 0 2.500-2M8.500 11.200H12a3.200 3.200 0 0 0 0-6.400H8.500a3 3 0 0 0-2.500 2" strokeWidth="1.7" />
      ),
    },
  ],
];

const PanelDock = () => (
  <aside className="flex w-[35px] shrink-0 flex-col border-l-3 border-[#424242] text-[#cdcdcd]">
    <div className="flex h-[11px] items-center justify-end bg-[#434343] pr-1">
      <Icon w={8} h={6}>
        <path d="M3.800.8L1.600 3l2.200 2.200M7 .8L4.800 3 7 5.200" />
      </Icon>
    </div>
    {PANELS.map((panel, i) => (
      <div key={i} className="border-b border-[#3f3f3f] pt-1 pb-[2px]">
        <div className="pb-[2px]">
          <Grip />
        </div>
        {panel.map((p) => (
          <button key={p.name} aria-label={p.name} className="flex h-6 w-full items-center justify-center pl-px">
            {p.text ? (
              <span className="text-[13px] leading-none italic">{p.text}</span>
            ) : (
              <Icon>{p.art}</Icon>
            )}
          </button>
        ))}
      </div>
    ))}
  </aside>
);

const App = () => (
  <div className="flex h-screen flex-col bg-black pt-[35px] pr-[327px] pb-[41px] pl-[330px] font-['Noto_Sans',sans-serif]">
    <div className="flex min-h-0 flex-1 flex-col overflow-hidden rounded-t-sm bg-[#535353]">
      <TitleBar />
      <ControlBar />
      <div className="flex min-h-0 flex-1">
        <Toolbox />
        <div className="flex min-w-0 flex-1 flex-col">
          <DocumentTabs />
          <div className="flex min-h-0 flex-1">
            <div className="flex min-w-0 flex-1 flex-col">
              <div className="flex shrink-0">
                <svg width="14" height="15" stroke="#777" className="shrink-0 bg-[#1f1f1f]" aria-hidden="true">
                  <path d="M4.500 0v15M0 4.500h14" stroke="#555" />
                  <path d="M13.500 0v15M0 14.500h14" />
                </svg>
                <HorizontalRuler />
              </div>
              <div className="flex min-h-0 flex-1">
                <VerticalRuler />
                <Canvas />
              </div>
            </div>
            <VerticalScrollbar />
          </div>
          <StatusBar />
        </div>
        <PanelDock />
      </div>
    </div>
  </div>
);

export default App;
